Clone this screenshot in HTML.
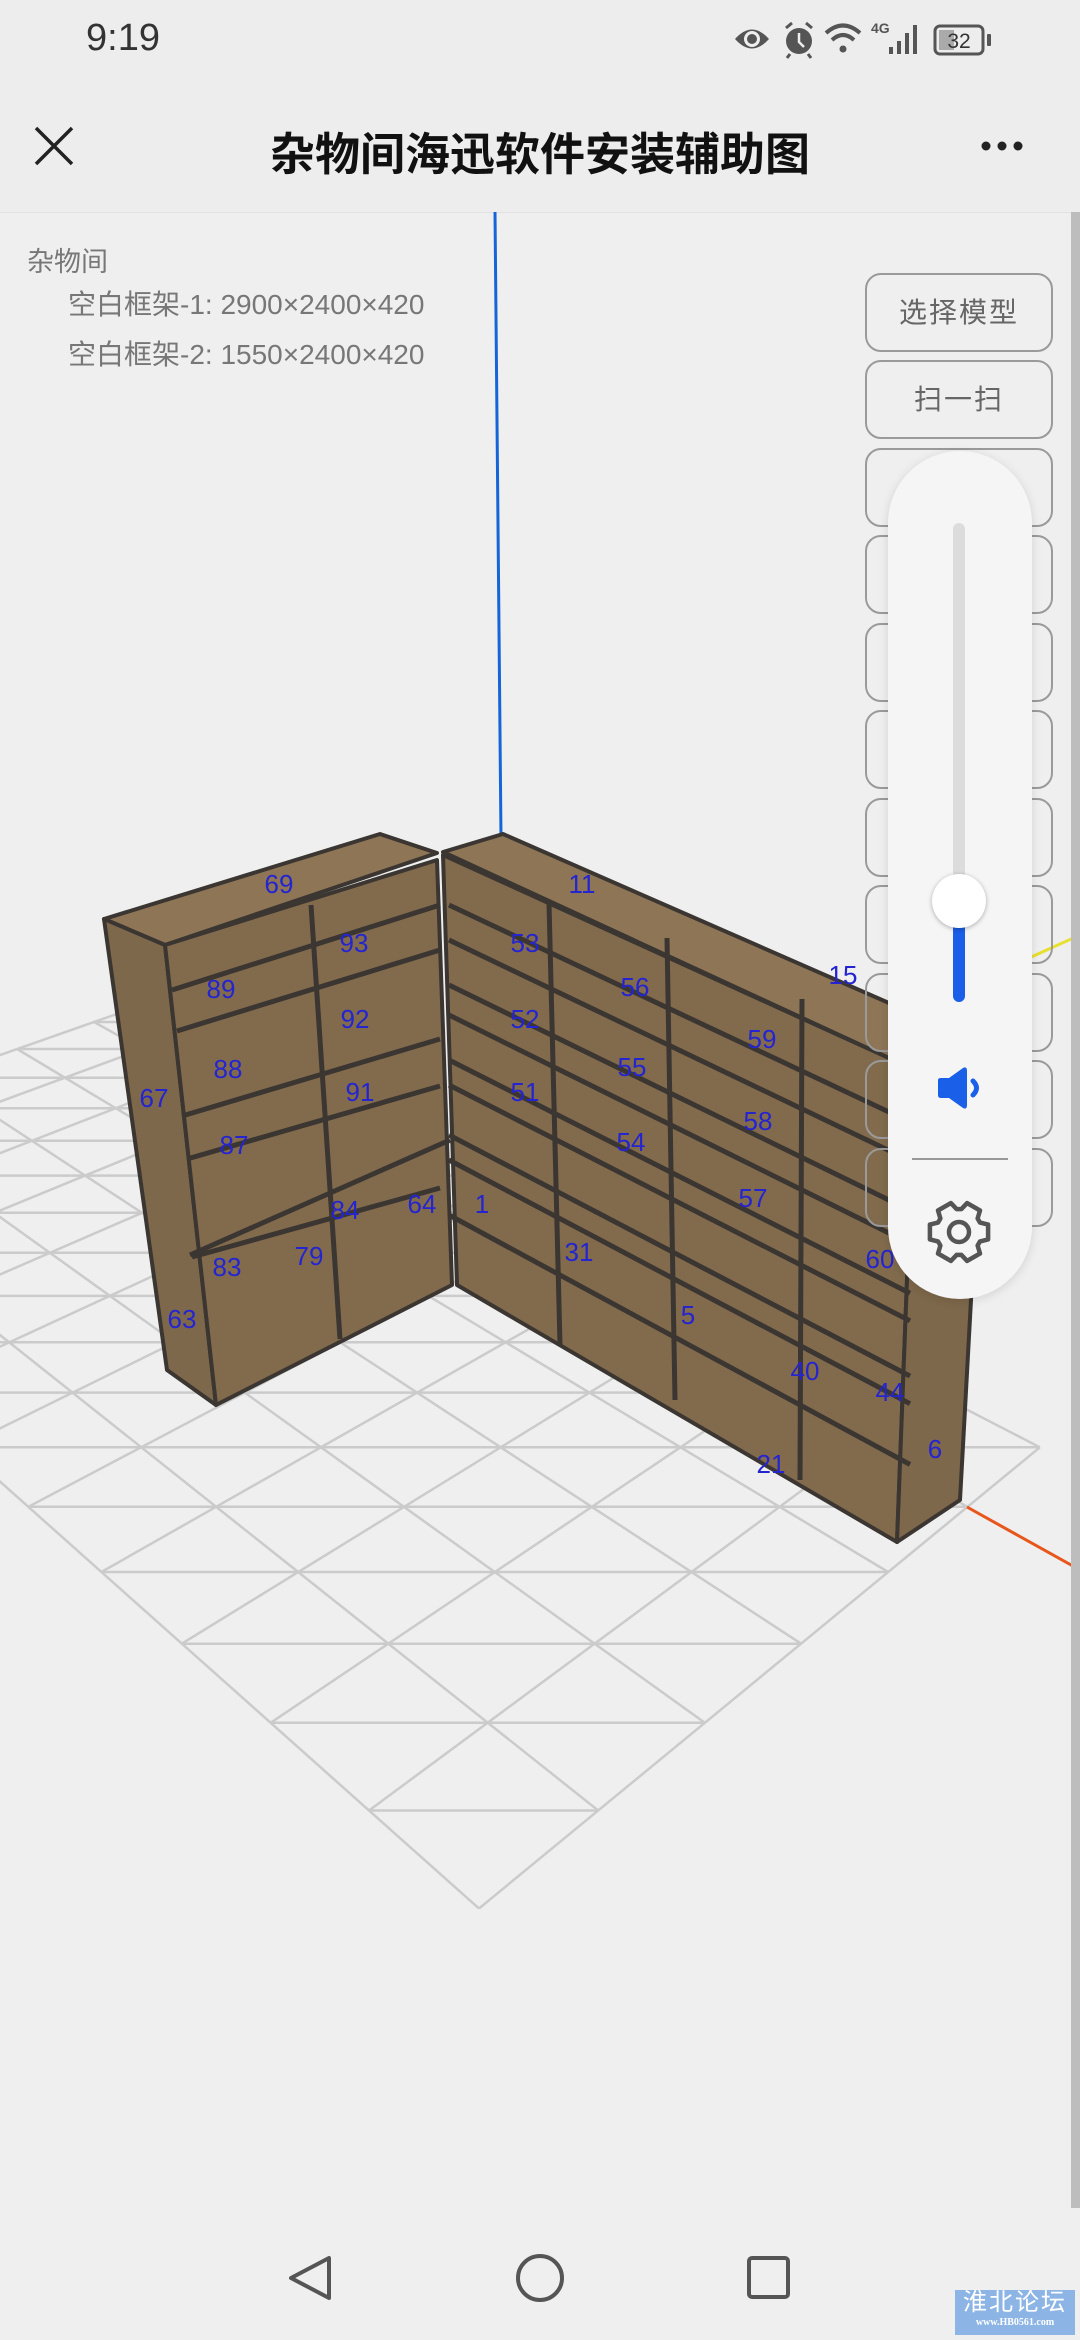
<!DOCTYPE html>
<html><head><meta charset="utf-8">
<style>
html,body{margin:0;padding:0;}
body{width:1080px;height:2340px;background:#efefef;position:relative;overflow:hidden;font-family:"Liberation Sans","Noto Sans CJK SC",sans-serif;}
.abs{position:absolute;}
.btn{position:absolute;left:865px;width:184px;height:75px;border:2px solid #9a9a9a;border-radius:16px;box-sizing:content-box;color:#666;font-size:28px;text-align:center;line-height:75px;letter-spacing:2px;}
</style></head><body>
<div class="abs" style="left:0;top:0;width:1080px;height:212px;background:#ededed;border-bottom:1px solid #e2e2e2;"></div>
<div class="abs" style="left:86px;top:17px;font-size:38px;color:#333;">9:19</div>
<svg class="abs" style="left:725px;top:15px" width="300" height="50" viewBox="725 15 300 50">
 <path d="M735 39 Q752 20 769 39 Q752 58 735 39Z" fill="#555"/><circle cx="752" cy="39" r="8" fill="#eee"/><circle cx="752" cy="39" r="5" fill="#555"/>
 <circle cx="799" cy="41" r="13" fill="#555"/><path d="M799 33 v9 l5 5" stroke="#eee" stroke-width="2.5" fill="none"/><path d="M786 28 l6 -5 M812 28 l-6 -5 M790 54 l-3 4 M808 54 l3 4" stroke="#555" stroke-width="3"/>
 <path d="M826 33 Q843 18 860 33" stroke="#555" stroke-width="4" fill="none"/><path d="M832 40 Q843 30 854 40" stroke="#555" stroke-width="4" fill="none"/><circle cx="843" cy="49" r="3.5" fill="#555"/>
 <text x="871" y="33" font-size="14" font-weight="bold" fill="#555" font-family="Liberation Sans">4G</text>
 <rect x="889" y="47" width="4" height="7" fill="#555"/><rect x="897" y="41" width="4" height="13" fill="#555"/><rect x="905" y="33" width="4" height="21" fill="#555"/><rect x="913" y="25" width="4" height="29" fill="#555"/>
 <rect x="935" y="26" width="48" height="28" rx="5" fill="none" stroke="#555" stroke-width="3"/><rect x="939" y="30" width="15" height="20" fill="#aaa"/><text x="959" y="48" font-size="21" fill="#333" text-anchor="middle" font-family="Liberation Sans">32</text><rect x="987" y="34" width="4" height="12" rx="1" fill="#555"/>
</svg>
<svg class="abs" style="left:30px;top:122px" width="48" height="48"><path d="M6 6 L42 42 M42 6 L6 42" stroke="#222" stroke-width="3.5"/></svg>
<div class="abs" style="left:0;width:1080px;top:118px;text-align:center;font-size:45px;color:#111;font-weight:bold;">杂物间海迅软件安装辅助图</div>
<svg class="abs" style="left:975px;top:136px" width="60" height="20"><circle cx="11" cy="10" r="4.5" fill="#222"/><circle cx="27" cy="10" r="4.5" fill="#222"/><circle cx="43" cy="10" r="4.5" fill="#222"/></svg>

<svg id="scene" class="abs" style="left:0;top:0" width="1080" height="2340" viewBox="0 0 1080 2340">
 <g id="grid" stroke="#cbcbcb" stroke-width="2.5" fill="none"></g>
 <line x1="495" y1="212" x2="501" y2="838" stroke="#1565d8" stroke-width="3"/>
 <line x1="967" y1="1507" x2="1080" y2="1570" stroke="#e8561c" stroke-width="3"/>
 <line x1="1029" y1="958" x2="1080" y2="935" stroke="#e8e030" stroke-width="3"/>
 <g stroke="#3b3631" stroke-width="4" stroke-linejoin="round">
  <polygon points="104,919 380,834 437,853 165,945" fill="#8d7556"/>
  <polygon points="104,919 165,945 216,1405 167,1370" fill="#7e684b"/>
  <polygon points="165,945 437,860 452,1285 216,1405" fill="#826b4d"/>
  <polygon points="443,852 503,834 985,1045 915,1070" fill="#8d7556"/>
  <polygon points="443,855 915,1070 897,1542 457,1285" fill="#826b4d"/>
  <polygon points="915,1070 985,1045 960,1500 897,1542" fill="#7e684b"/>
 </g>
 <g id="shelves" stroke="#3b3631" stroke-width="5" fill="none"></g>
 <g id="nums" fill="#2424d0" font-size="26" font-family="Liberation Sans" text-anchor="middle"></g>
</svg>

<div class="abs" style="left:27px;top:240px;font-size:27px;color:#777;">杂物间</div>
<div class="abs" style="left:68px;top:283px;font-size:28px;color:#777;">空白框架-1: 2900×2400×420</div>
<div class="abs" style="left:68px;top:333px;font-size:28px;color:#777;">空白框架-2: 1550×2400×420</div>

<div class="btn" style="top:273px">选择模型</div>
<div class="btn" style="top:360px">扫一扫</div>
<div class="btn" style="top:448px"></div>
<div class="btn" style="top:535px"></div>
<div class="btn" style="top:623px"></div>
<div class="btn" style="top:710px"></div>
<div class="btn" style="top:798px"></div>
<div class="btn" style="top:885px"></div>
<div class="btn" style="top:973px"></div>
<div class="btn" style="top:1060px"></div>
<div class="btn" style="top:1148px"></div>

<div class="abs" style="left:888px;top:451px;width:144px;height:848px;border-radius:72px;background:#f5f5f5;box-shadow:0 2px 10px rgba(0,0,0,0.12);"></div>
<div class="abs" style="left:953px;top:523px;width:12px;height:479px;border-radius:6px;background:#dcdcdc;"></div>
<div class="abs" style="left:953px;top:901px;width:12px;height:101px;border-radius:6px;background:#1a5fe8;"></div>
<div class="abs" style="left:932px;top:874px;width:54px;height:54px;border-radius:50%;background:#fff;box-shadow:0 1px 5px rgba(0,0,0,0.3);"></div>
<svg class="abs" style="left:935px;top:1065px" width="50" height="46" viewBox="0 0 50 46"><path d="M3 15 Q3 13 6 13 H14 L28 3 Q32 1 32 6 V40 Q32 45 28 43 L14 33 H6 Q3 33 3 30Z" fill="#1a5fe8"/><path d="M38 16 Q45 23 38 30" stroke="#1a5fe8" stroke-width="5" fill="none" stroke-linecap="round"/></svg>
<div class="abs" style="left:912px;top:1158px;width:96px;height:2px;background:#999;"></div>
<svg class="abs" style="left:925px;top:1198px" width="68" height="68" viewBox="-34 -34 68 68"><path id="gear" d="" fill="none" stroke="#555" stroke-width="4.5" stroke-linejoin="round"/><circle r="10" fill="none" stroke="#555" stroke-width="4.5"/></svg>

<div class="abs" style="left:1071px;top:212px;width:9px;height:1996px;background:#bdbdbd;"></div>

<svg class="abs" style="left:280px;top:2250px" width="520" height="60" viewBox="280 2250 520 60"><path d="M329 2258 L329 2298 L291 2278Z" fill="none" stroke="#555" stroke-width="4" stroke-linejoin="round"/><circle cx="540" cy="2278" r="22" fill="none" stroke="#555" stroke-width="4"/><rect x="749" y="2258" width="39" height="39" rx="3" fill="none" stroke="#555" stroke-width="4"/></svg>
<div class="abs" style="left:955px;top:2290px;width:120px;height:45px;background:#8cb5e6;color:#fff;text-align:center;">
 <div style="font-size:24px;line-height:26px;letter-spacing:2px;">淮北论坛</div>
 <div style="font-size:10px;line-height:14px;font-family:'Liberation Serif',serif;font-weight:bold;">www.HB0561.com</div>
</div>

<script>
(function(){
 function P(i,j){var s=i+j,t=i-j,d=s+17.2;return [563+(-1445+2085*t)/d,125+30677/d];}
 var g=document.getElementById('grid'),out='';
 function L(a,b){out+='<line x1="'+a[0].toFixed(1)+'" y1="'+a[1].toFixed(1)+'" x2="'+b[0].toFixed(1)+'" y2="'+b[1].toFixed(1)+'"/>';}
 var NI=6,NJ=12;
 for(var i=0;i<=NI;i++)L(P(i,0),P(i,NJ));
 for(var j=0;j<=NJ;j++)L(P(0,j),P(NI,j));
 for(var s=1;s<NI+NJ;s++){var i0=Math.min(s,NI),j0=s-i0;var j1=Math.min(s,NJ),i1=s-j1;L(P(i0,j0),P(i1,j1));}
 g.innerHTML=out;
 var sh='';
 function l(x1,y1,x2,y2){sh+='<line x1="'+x1+'" y1="'+y1+'" x2="'+x2+'" y2="'+y2+'"/>';}
 l(311,905,340,1339);
 [990,1028,1110,1150,1245].forEach(function(y,k){var yl=y+k*3;l(172+k*5,yl,440,yl-85+k*4);});
 l(190,1255,450,1140);
 l(549,903,560,1345);l(667,938,675,1400);l(802,999,800,1480);
 [905,940,985,1015,1060,1085,1135,1160,1215].forEach(function(yl){var yr=1070+(yl-858)*1.105;l(449,yl,910,yr);});
 document.getElementById('shelves').innerHTML=sh;
 var n=[[69,279,885],[93,354,944],[89,221,990],[92,355,1020],[88,228,1070],[91,360,1093],[87,234,1146],[67,154,1099],[83,227,1268],[79,309,1257],[84,345,1211],[64,422,1205],[63,182,1320],[11,582,885],[53,525,944],[56,635,988],[52,525,1020],[55,632,1068],[51,525,1093],[54,631,1143],[1,482,1205],[31,579,1253],[15,843,976],[59,762,1040],[58,758,1122],[57,753,1199],[5,688,1316],[40,805,1372],[44,890,1393],[6,935,1450],[21,771,1465],[60,880,1260]];
 var tx='';n.forEach(function(a){tx+='<text x="'+a[1]+'" y="'+(a[2]+8)+'">'+a[0]+'</text>';});
 document.getElementById('nums').innerHTML=tx;
 var d='',R=30,r=23,N=6;
 for(var k=0;k<N;k++){var a=k*2*Math.PI/N;
  var pts=[[r,a-0.42],[R,a-0.25],[R,a+0.25],[r,a+0.42]];
  pts.forEach(function(p,m){var x=p[0]*Math.cos(p[1]),y=p[0]*Math.sin(p[1]);d+=(k==0&&m==0?'M':'L')+x.toFixed(1)+' '+y.toFixed(1)+' ';});}
 document.getElementById('gear').setAttribute('d',d+'Z');
})();
</script>
</body></html>
